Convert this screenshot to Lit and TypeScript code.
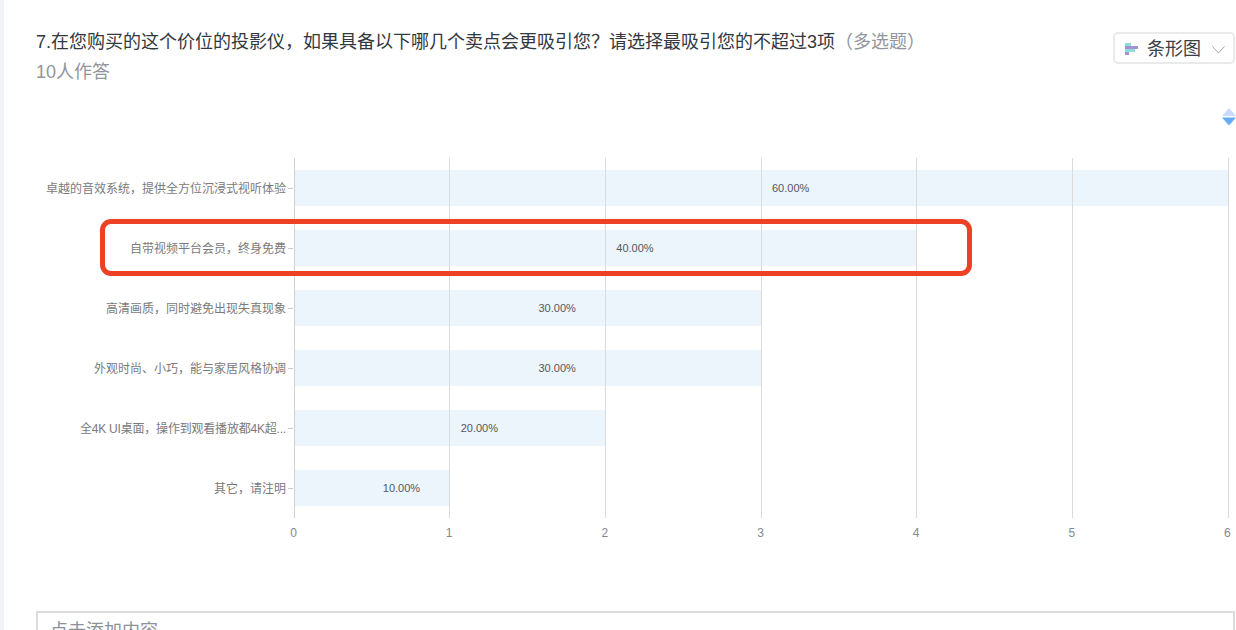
import { LitElement, html, css } from "lit";
import { customElement } from "lit/decorators.js";

const ROWS = [
  { label: "卓越的音效系统，提供全方位沉浸式视听体验", value: 6, pct: "60.00%", tight: false },
  { label: "自带视频平台会员，终身免费", value: 4, pct: "40.00%", tight: false },
  { label: "高清画质，同时避免出现失真现象", value: 3, pct: "30.00%", tight: false },
  { label: "外观时尚、小巧，能与家居风格协调", value: 3, pct: "30.00%", tight: false },
  { label: "全4K UI桌面，操作到观看播放都4K超...", value: 2, pct: "20.00%", tight: true },
  { label: "其它，请注明", value: 1, pct: "10.00%", tight: false },
];
const TICKS = [0, 1, 2, 3, 4, 5, 6];

@customElement("app-root")
export class AppRoot extends LitElement {
  static styles = css`
    :host {
      display: flex;
      width: 1236px;
      height: 630px;
      overflow: hidden;
      background: #fff;
      font-family: "Liberation Sans", "Noto Sans CJK SC", sans-serif;
    }
    .strip { width: 4px; flex: none; background: #f0f2f6; }
    .main { flex: 1; min-width: 0; display: flex; flex-direction: column; position: relative; }
    .main > * { flex: none; }
    .head {
      display: flex;
      justify-content: space-between;
      align-items: flex-start;
      padding: 29px 1px 0 32px;
      height: 79px;
      box-sizing: border-box;
    }
    .title { font-size: 18px; line-height: 26px; color: #33383f; white-space: nowrap; }
    .title em { font-style: normal; color: #92969c; }
    .sub { font-size: 18px; line-height: 26px; margin-top: 4px; color: #92969c; }
    .select {
      margin-top: 3px;
      width: 122px;
      height: 32px;
      box-sizing: border-box;
      border: 2px solid #e9eaec;
      border-radius: 5px;
      display: flex;
      align-items: center;
      padding: 0 0 3px 10px;
      font-size: 18px;
      color: #3b4048;
    }
    .select .chart-ico { margin: 4px 9px 0 0; flex: none; }
    .select .chev { margin: 7px 0 0 11px; flex: none; }
    .sorter {
      display: flex;
      justify-content: flex-end;
      height: 79px;
      box-sizing: border-box;
      padding-top: 29px;
      align-items: flex-start;
    }
    .chart { position: relative; display: flex; flex-direction: column; height: 360px; }
    .row { display: flex; height: 60px; align-items: center; }
    .label {
      width: 282px;
      margin-right: 2px;
      padding-bottom: 2px;
      flex: none;
      text-align: right;
      font-size: 12px;
      color: #7a7a7c;
      white-space: nowrap;
    }
    .label.tight { letter-spacing: -0.2px; }
    .tick { width: 5px; height: 1px; background: #c9c9c9; flex: none; margin-right: 0.5px; }
    .plot { width: 934px; flex: none; height: 36px; }
    .bar {
      height: 36px;
      background: #ecf4fc;
      display: grid;
      grid-template-columns: 1fr 1fr;
      align-items: center;
    }
    .val {
      grid-column: 2;
      padding-left: 11.5px;
      font-size: 11px;
      color: #55585c;
      white-space: nowrap;
    }
    .grid-line {
      position: absolute;
      top: 0;
      bottom: 0;
      width: 1px;
      background: #dadbdd;
    }
    .grid-line.first { background: #cfd0d2; width: 1.5px; }
    .axis {
      margin: 8px 0 0 289.5px;
      width: 934px;
      display: flex;
      justify-content: space-between;
      font-size: 12px;
      line-height: 14px;
      color: #85888d;
    }
    .axis span { width: 0; display: flex; justify-content: center; }
    .note {
      margin: 71px 1px 0 32px;
      height: 60px;
      box-sizing: border-box;
      border: 2px solid #dcdcdd;
      padding: 5px 12px;
      font-size: 18px;
      line-height: 26px;
      color: #8d9198;
    }
    .mark {
      position: absolute;
      left: 96px;
      top: 218.5px;
      width: 872px;
      height: 57px;
      box-sizing: border-box;
      border: 5.5px solid #ec4125;
      border-radius: 11px;
      pointer-events: none;
    }
  `;

  render() {
    return html`
      <div class="strip"></div>
      <div class="main">
        <div class="head">
          <div>
            <div class="title">7.在您购买的这个价位的投影仪，如果具备以下哪几个卖点会更吸引您？请选择最吸引您的不超过3项<em>（多选题）</em></div>
            <div class="sub">10人作答</div>
          </div>
          <div class="select">
            <svg class="chart-ico" width="13" height="12" viewBox="0 0 13 12">
              <rect x="0" y="0" width="6" height="3" fill="#8fdcdc" />
              <rect x="0" y="3" width="13" height="3" fill="#a68fd3" />
              <rect x="0" y="6" width="10" height="3" fill="#8fdcdc" />
              <rect x="0" y="9" width="4" height="3" fill="#a68fd3" />
            </svg>
            <span>条形图</span>
            <svg class="chev" width="13" height="8" viewBox="0 0 13 8">
              <path d="M0.5 0.5 L6.5 7 L12.5 0.5" fill="none" stroke="#a4a7ab" stroke-width="1" />
            </svg>
          </div>
        </div>
        <div class="sorter">
          <svg width="14" height="18" viewBox="0 0 14 18">
            <path d="M7 0 L14 8 L0 8 Z" fill="#c9dcfb" />
            <path d="M0 9.5 L14 9.5 L7 17.5 Z" fill="#66aaf8" />
          </svg>
        </div>
        <div class="chart">
          ${ROWS.map(
            (r) => html`
              <div class="row">
                <div class="label ${r.tight ? "tight" : ""}">${r.label}</div>
                <div class="tick"></div>
                <div class="plot">
                  <div class="bar" style="width:${(r.value / 6) * 100}%">
                    <span class="val">${r.pct}</span>
                  </div>
                </div>
              </div>
            `
          )}
          ${TICKS.map(
            (t) => html`<div class="grid-line ${t === 0 ? "first" : ""}" style="left:${289.5 + (t * 934) / 6}px"></div>`
          )}
        </div>
        <div class="axis">${TICKS.map((t) => html`<span>${t}</span>`)}</div>
        <div class="note">点击添加内容</div>
        <div class="mark"></div>
      </div>
    `;
  }
}
